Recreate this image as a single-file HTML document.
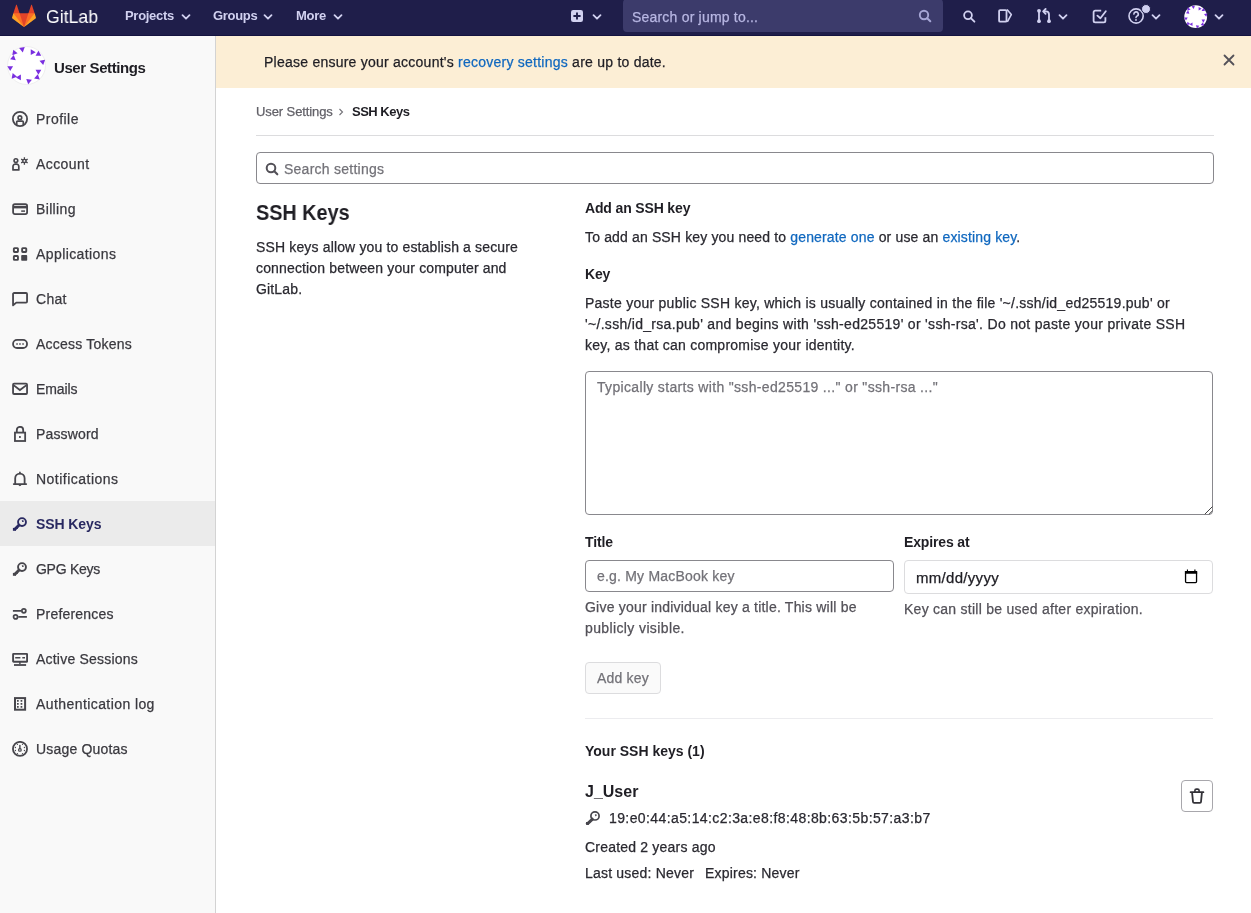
<!DOCTYPE html>
<html><head><meta charset="utf-8">
<style>
*{box-sizing:border-box;margin:0;padding:0}
.t,.lbl{will-change:transform;-webkit-text-stroke:0.25px currentColor}
.b,.nv,.act .lbl{-webkit-text-stroke:0}
html,body{width:1251px;height:913px;overflow:hidden;background:#fff;font-family:"Liberation Sans",sans-serif;color:#333238}
.a{position:absolute}
.t{position:absolute;white-space:nowrap;font-size:14px;line-height:14px}
.b{font-weight:bold}
#nav{position:absolute;left:0;top:0;width:1251px;height:36px;background:#1f1e4a;border-bottom:1px solid #141340}
.nv{color:#d1d1f0;font-weight:bold;font-size:13px;line-height:13px;letter-spacing:-0.3px}
#side{position:absolute;left:0;top:36px;width:216px;height:877px;background:#f9f9f9;border-right:1px solid #d3d3d3}
.si{position:absolute;left:0;width:215px;height:45px}
.si .lbl{position:absolute;left:36px;top:16px;font-size:14px;line-height:14px;letter-spacing:0.3px;color:#3a393f;white-space:nowrap}
.si svg{position:absolute;left:12px;top:15px}
.act{background:#ebebeb}
.act .lbl{color:#292961;font-weight:bold;letter-spacing:-0.1px}
#banner{position:absolute;left:216px;top:36px;width:1035px;height:52px;background:#fceed5}
a{color:#1068bf;text-decoration:none}
.help{color:#535158}
</style></head><body>

<!-- NAVBAR -->
<div id="nav">
  <svg class="a" style="left:11px;top:4px" width="26" height="24" viewBox="0 0 36 36">
    <path fill="#E24329" d="M2 14l9.38 9v-9l-4-12.28c-.205-.632-1.176-.632-1.38 0z"/>
    <path fill="#E24329" d="M34 14l-9.38 9v-9l4-12.28c.205-.632 1.176-.632 1.38 0z"/>
    <path fill="#E24329" d="M18,34.38 3,14 33,14 Z"/>
    <path fill="#FC6D26" d="M18,34.38 11.38,14 2,14 6,25Z"/>
    <path fill="#FC6D26" d="M18,34.38 24.62,14 34,14 30,25Z"/>
    <path fill="#FCA326" d="M2 14L.1 20.16c-.18.565 0 1.2.5 1.56l17.42 12.66z"/>
    <path fill="#FCA326" d="M34 14l1.9 6.16c.18.565 0 1.2-.5 1.56L18 34.38z"/>
  </svg>
  <div class="t" style="left:45.5px;top:7px;font-size:19px;line-height:19px;color:#fff;letter-spacing:0;transform:scaleX(0.93);transform-origin:0 0;-webkit-text-stroke:0">GitLab</div>
  <div class="t nv" style="left:125px;top:9px">Projects</div>
  <svg class="a" style="left:181px;top:12.5px" width="10" height="8" viewBox="0 0 10 8"><path d="M1.5 2.2 5 5.7 8.5 2.2" fill="none" stroke="#d1d1f0" stroke-width="1.8" stroke-linecap="round" stroke-linejoin="round"/></svg>
  <div class="t nv" style="left:213px;top:9px">Groups</div>
  <svg class="a" style="left:263px;top:12.5px" width="10" height="8" viewBox="0 0 10 8"><path d="M1.5 2.2 5 5.7 8.5 2.2" fill="none" stroke="#d1d1f0" stroke-width="1.8" stroke-linecap="round" stroke-linejoin="round"/></svg>
  <div class="t nv" style="left:296px;top:9px">More</div>
  <svg class="a" style="left:333px;top:12.5px" width="10" height="8" viewBox="0 0 10 8"><path d="M1.5 2.2 5 5.7 8.5 2.2" fill="none" stroke="#d1d1f0" stroke-width="1.8" stroke-linecap="round" stroke-linejoin="round"/></svg>

  <!-- plus -->
  <svg class="a" style="left:571px;top:10px" width="12" height="12" viewBox="0 0 12 12"><rect x="0" y="0" width="12" height="12" rx="2.2" fill="#d1d1f0"/><path d="M6 2.4v7.2M2.4 6h7.2" stroke="#1f1e4a" stroke-width="1.9"/></svg>
  <svg class="a" style="left:592px;top:13px" width="10" height="8" viewBox="0 0 10 8"><path d="M1.5 2.2 5 5.7 8.5 2.2" fill="none" stroke="#d1d1f0" stroke-width="1.8" stroke-linecap="round" stroke-linejoin="round"/></svg>

  <!-- search -->
  <div class="a" style="left:623px;top:-1px;width:320px;height:33px;background:#3c3b6b;border-radius:4px"></div>
  <div class="t" style="left:632px;top:10px;color:#b8b7e3;letter-spacing:0.2px">Search or jump to...</div>
  <svg class="a" style="left:918px;top:9px" width="14" height="14" viewBox="0 0 14 14"><circle cx="6" cy="6" r="4.2" fill="none" stroke="#a6a6d6" stroke-width="1.9"/><path d="M9.2 9.2 12.3 12.3" stroke="#a6a6d6" stroke-width="2" stroke-linecap="round"/></svg>

  <!-- right icons -->
  <svg class="a" style="left:961px;top:9px" width="16" height="16" viewBox="0 0 16 16"><circle cx="7" cy="6.3" r="3.9" fill="none" stroke="#d1d1f0" stroke-width="1.8"/><path d="M9.8 9.1 13.4 12.7" stroke="#d1d1f0" stroke-width="1.9" stroke-linecap="round"/></svg>
  <svg class="a" style="left:997px;top:8px" width="16" height="16" viewBox="0 0 16 16"><rect x="2.1" y="2.1" width="7.4" height="11.6" rx="1" fill="none" stroke="#d1d1f0" stroke-width="1.8"/><path d="M10 1.6 14.3 6.6 10.3 13.9" fill="none" stroke="#d1d1f0" stroke-width="1.6" stroke-linejoin="round"/></svg>
  <svg class="a" style="left:1036px;top:8px" width="16" height="16" viewBox="0 0 16 16"><path d="M3 2.8v10.4" stroke="#d1d1f0" stroke-width="1.8"/><circle cx="3" cy="2.8" r="1.9" fill="#d1d1f0"/><circle cx="3" cy="13.2" r="1.9" fill="#d1d1f0"/><circle cx="13" cy="13.2" r="1.9" fill="#d1d1f0"/><path d="M13 13V6.6Q13 3.4 9.8 3.4H7.6" fill="none" stroke="#d1d1f0" stroke-width="1.8"/><path d="M9.6 1 7.2 3.4 9.6 5.8" fill="none" stroke="#d1d1f0" stroke-width="1.8" stroke-linejoin="round" stroke-linecap="round"/></svg>
  <svg class="a" style="left:1058px;top:13px" width="10" height="8" viewBox="0 0 10 8"><path d="M1.5 2.2 5 5.7 8.5 2.2" fill="none" stroke="#d1d1f0" stroke-width="1.8" stroke-linecap="round" stroke-linejoin="round"/></svg>
  <svg class="a" style="left:1092px;top:9px" width="16" height="16" viewBox="0 0 16 16"><path d="M9.2 1.6H3.2a1.6 1.6 0 0 0-1.6 1.6v8.6a1.6 1.6 0 0 0 1.6 1.6h8.6a1.6 1.6 0 0 0 1.6-1.6V8.2" fill="none" stroke="#d1d1f0" stroke-width="1.8"/><path d="M5.4 6.6 8.4 9.2 13.8 2.2" fill="none" stroke="#d1d1f0" stroke-width="1.8" stroke-linecap="round" stroke-linejoin="round"/></svg>
  <svg class="a" style="left:1127px;top:7px" width="18" height="18" viewBox="0 0 18 18"><circle cx="9.1" cy="9" r="7.1" fill="none" stroke="#d1d1f0" stroke-width="1.6"/><path d="M6.9 7.1a2.2 2.2 0 1 1 3.1 2c-.7.35-1 .8-1 1.5" fill="none" stroke="#d1d1f0" stroke-width="1.6" stroke-linecap="round"/><circle cx="9" cy="12.9" r="0.95" fill="#d1d1f0"/></svg>
  <div class="a" style="left:1141px;top:4px;width:10px;height:10px;border-radius:50%;background:#cfcff0;border:1px solid #1f1e4a"></div>
  <svg class="a" style="left:1151px;top:13px" width="10" height="8" viewBox="0 0 10 8"><path d="M1.5 2.2 5 5.7 8.5 2.2" fill="none" stroke="#d1d1f0" stroke-width="1.8" stroke-linecap="round" stroke-linejoin="round"/></svg>
  <svg class="a" style="left:1184px;top:5px" width="24" height="24" viewBox="0 0 39 39" id="av2"><circle cx="19" cy="19" r="18.5" fill="#fff"/><polygon points="12.10,2.07 17.73,1.08 15.77,6.45" fill="#7a2fe0"/><polygon points="6.27,3.70 10.65,7.37 5.28,9.33" fill="#7a2fe0"/><polygon points="23.75,9.06 23.75,3.34 28.70,6.20" fill="#7a2fe0"/><polygon points="34.26,9.65 28.54,9.65 31.40,4.70" fill="#7a2fe0"/><polygon points="6.77,8.95 8.73,14.32 3.10,13.33" fill="#7a2fe0"/><polygon points="36.17,19.05 32.50,14.67 38.13,13.68" fill="#7a2fe0"/><polygon points="6.06,20.15 3.20,25.10 0.34,20.15" fill="#7a2fe0"/><polygon points="28.54,23.75 34.26,23.75 31.40,28.70" fill="#7a2fe0"/><polygon points="10.05,30.77 4.68,32.73 5.67,27.10" fill="#7a2fe0"/><polygon points="13.85,34.26 8.90,31.40 13.85,28.54" fill="#7a2fe0"/><polygon points="27.10,32.53 30.77,28.15 32.73,33.52" fill="#7a2fe0"/><polygon points="21.23,38.25 19.27,32.88 24.90,33.87" fill="#7a2fe0"/></svg>
  <svg class="a" style="left:1214px;top:13px" width="10" height="8" viewBox="0 0 10 8"><path d="M1.5 2.2 5 5.7 8.5 2.2" fill="none" stroke="#d1d1f0" stroke-width="1.8" stroke-linecap="round" stroke-linejoin="round"/></svg>
</div>

<!-- SIDEBAR -->
<div id="side">
  <div class="a" style="left:7px;top:10px;width:39px;height:39px;border-radius:50%;background:#fff;border:1px solid #efefef"></div>
  <svg class="a" style="left:7px;top:10px" width="39" height="39" viewBox="0 0 39 39" id="av1"><polygon points="12.10,2.07 17.73,1.08 15.77,6.45" fill="#7a2fe0"/><polygon points="6.27,3.70 10.65,7.37 5.28,9.33" fill="#7a2fe0"/><polygon points="23.75,9.06 23.75,3.34 28.70,6.20" fill="#7a2fe0"/><polygon points="34.26,9.65 28.54,9.65 31.40,4.70" fill="#7a2fe0"/><polygon points="6.77,8.95 8.73,14.32 3.10,13.33" fill="#7a2fe0"/><polygon points="36.17,19.05 32.50,14.67 38.13,13.68" fill="#7a2fe0"/><polygon points="6.06,20.15 3.20,25.10 0.34,20.15" fill="#7a2fe0"/><polygon points="28.54,23.75 34.26,23.75 31.40,28.70" fill="#7a2fe0"/><polygon points="10.05,30.77 4.68,32.73 5.67,27.10" fill="#7a2fe0"/><polygon points="13.85,34.26 8.90,31.40 13.85,28.54" fill="#7a2fe0"/><polygon points="27.10,32.53 30.77,28.15 32.73,33.52" fill="#7a2fe0"/><polygon points="21.23,38.25 19.27,32.88 24.90,33.87" fill="#7a2fe0"/></svg>
  <div class="t b" style="left:54px;top:24px;font-size:15px;line-height:15px;color:#1f1e24;letter-spacing:-0.4px">User Settings</div>
</div>

<!--ITEMS-->
<div class="si" style="top:96px"><svg width="16" height="16" viewBox="0 0 16 16"><circle cx="8" cy="8" r="7.1" fill="none" stroke="#47464c" stroke-width="1.8"/><circle cx="7.9" cy="6.7" r="1.85" fill="none" stroke="#47464c" stroke-width="1.6"/><path d="M4.7 14V11.1a1 1 0 0 1 1-1h4.6a1 1 0 0 1 1 1V14" fill="none" stroke="#47464c" stroke-width="1.7"/></svg><div class="lbl" style="letter-spacing:0.467px">Profile</div></div>
<div class="si" style="top:141px"><svg width="16" height="16" viewBox="0 0 16 16"><circle cx="3.9" cy="4.6" r="1.85" fill="none" stroke="#47464c" stroke-width="1.6"/><path d="M1 13.9V10.4a2.3 2.3 0 0 1 2.3-2.3h1.2a2.3 2.3 0 0 1 2.3 2.3v3.5z" fill="none" stroke="#47464c" stroke-width="1.7" stroke-linejoin="round"/><circle cx="12.4" cy="4.95" r="2.3" fill="#47464c"/><path d="M12.4 1.2v7.5M9.15 3.07l6.5 3.75M9.15 6.83l6.5-3.75" stroke="#47464c" stroke-width="1.3"/><circle cx="12.4" cy="4.95" r="0.9" fill="#f9f9f9"/></svg><div class="lbl" style="letter-spacing:0.417px">Account</div></div>
<div class="si" style="top:186px"><svg width="16" height="16" viewBox="0 0 16 16"><rect x="1.1" y="3.1" width="14" height="10" rx="1.8" fill="none" stroke="#47464c" stroke-width="1.8"/><path d="M1 6.1h14" stroke="#47464c" stroke-width="2.6"/><path d="M9.2 10.1h3.8" stroke="#47464c" stroke-width="1.5"/></svg><div class="lbl" style="letter-spacing:0.350px">Billing</div></div>
<div class="si" style="top:231px"><svg width="16" height="16" viewBox="0 0 16 16"><rect x="1.85" y="2.15" width="4.1" height="3.8" rx="0.6" fill="none" stroke="#47464c" stroke-width="1.9"/><rect x="10.15" y="2.15" width="4.1" height="3.8" rx="0.6" fill="none" stroke="#47464c" stroke-width="1.9"/><rect x="1.85" y="10.05" width="4.1" height="3.8" rx="0.6" fill="none" stroke="#47464c" stroke-width="1.9"/><rect x="9.2" y="9.1" width="6" height="5.7" rx="0.8" fill="#47464c"/></svg><div class="lbl" style="letter-spacing:0.409px">Applications</div></div>
<div class="si" style="top:276px"><svg width="16" height="16" viewBox="0 0 16 16"><path d="M1.05 14.3V3a1 1 0 0 1 1-1h12a1 1 0 0 1 1 1v7.6a1 1 0 0 1-1 1H4.3z" fill="none" stroke="#47464c" stroke-width="1.8" stroke-linejoin="round"/></svg><div class="lbl" style="letter-spacing:0.300px">Chat</div></div>
<div class="si" style="top:321px"><svg width="16" height="16" viewBox="0 0 16 16"><rect x="1.05" y="3.95" width="14" height="8.05" rx="4" fill="none" stroke="#47464c" stroke-width="1.8"/><rect x="4.3" y="7.25" width="1.5" height="1.5" fill="#47464c"/><rect x="7.2" y="7.25" width="1.5" height="1.5" fill="#47464c"/><rect x="10.3" y="7.25" width="1.5" height="1.5" fill="#47464c"/></svg><div class="lbl" style="letter-spacing:0.217px">Access Tokens</div></div>
<div class="si" style="top:366px"><svg width="16" height="16" viewBox="0 0 16 16"><rect x="1.05" y="2.7" width="14" height="10.3" rx="1" fill="none" stroke="#47464c" stroke-width="1.8"/><path d="M1.5 4.1 7.9 9l6.6-4.9" fill="none" stroke="#47464c" stroke-width="1.8"/></svg><div class="lbl" style="letter-spacing:-0.100px">Emails</div></div>
<div class="si" style="top:411px"><svg width="16" height="16" viewBox="0 0 16 16"><rect x="2.95" y="6.6" width="10.2" height="8.4" fill="none" stroke="#47464c" stroke-width="1.8"/><path d="M4.8 6.6V4a3.2 3.2 0 0 1 6.4 0v2.6" fill="none" stroke="#47464c" stroke-width="1.8"/><rect x="7" y="10.1" width="1.8" height="1.8" fill="#47464c"/></svg><div class="lbl" style="letter-spacing:0.157px">Password</div></div>
<div class="si" style="top:456px"><svg width="16" height="16" viewBox="0 0 16 16"><path d="M3.2 13V7.3a4.7 4.7 0 0 1 9.4 0V13" fill="none" stroke="#47464c" stroke-width="1.8"/><path d="M1.8 13.1h12.4" stroke="#47464c" stroke-width="1.9" stroke-linecap="round"/><path d="M6.7 13.5a1.2 1.2 0 0 0 2.4 0z" fill="#47464c" stroke="#47464c" stroke-width="0.8"/><path d="M7.9 1.2v1.4" stroke="#47464c" stroke-width="1.6" stroke-linecap="round"/></svg><div class="lbl" style="letter-spacing:0.483px">Notifications</div></div>
<div class="si act" style="top:501px"><svg width="16" height="16" viewBox="0 0 16 16"><circle cx="10" cy="6.1" r="3.95" fill="none" stroke="#292961" stroke-width="1.9"/><path d="M10.2 4.6l1.4.3-.9 1z" fill="#292961" stroke="#292961" stroke-width="0.8"/><path d="M7.9 8.3 2.4 13.8" stroke="#292961" stroke-width="3"/><rect x="0.9" y="11.9" width="3" height="2.9" fill="#292961"/><rect x="3.7" y="11" width="2.1" height="1.9" fill="#292961"/></svg><div class="lbl" style="letter-spacing:-0.100px">SSH Keys</div></div>
<div class="si" style="top:546px"><svg width="16" height="16" viewBox="0 0 16 16"><circle cx="10" cy="6.1" r="3.95" fill="none" stroke="#47464c" stroke-width="1.9"/><path d="M10.2 4.6l1.4.3-.9 1z" fill="#47464c" stroke="#47464c" stroke-width="0.8"/><path d="M7.9 8.3 2.4 13.8" stroke="#47464c" stroke-width="3"/><rect x="0.9" y="11.9" width="3" height="2.9" fill="#47464c"/><rect x="3.7" y="11" width="2.1" height="1.9" fill="#47464c"/></svg><div class="lbl" style="letter-spacing:-0.271px">GPG Keys</div></div>
<div class="si" style="top:591px"><svg width="16" height="16" viewBox="0 0 16 16"><path d="M0.9 4.85h8.3M6.3 10.9h8.6" stroke="#47464c" stroke-width="1.8"/><circle cx="11.85" cy="4.85" r="2" fill="none" stroke="#47464c" stroke-width="1.7"/><circle cx="3.55" cy="10.9" r="2" fill="none" stroke="#47464c" stroke-width="1.7"/></svg><div class="lbl" style="letter-spacing:0.200px">Preferences</div></div>
<div class="si" style="top:636px"><svg width="16" height="16" viewBox="0 0 16 16"><rect x="1.1" y="2.85" width="14" height="7.9" rx="0.5" fill="none" stroke="#47464c" stroke-width="1.9"/><path d="M3.2 6.8h5.2M10.3 6.8h2.7" stroke="#47464c" stroke-width="1.5"/><path d="M7.9 10.8v2.2" stroke="#47464c" stroke-width="1.4"/><path d="M2 14h12.1" stroke="#47464c" stroke-width="1.8"/></svg><div class="lbl" style="letter-spacing:0.214px">Active Sessions</div></div>
<div class="si" style="top:681px"><svg width="16" height="16" viewBox="0 0 16 16"><rect x="3" y="2.1" width="10.1" height="11.6" fill="none" stroke="#47464c" stroke-width="2"/><path d="M5 4.85h1.7M8.6 4.85h1.7M5 7.9h1.7M8.6 7.9h1.7M5 10.9h1.7M8.6 10.9h1.7" stroke="#47464c" stroke-width="1.6"/></svg><div class="lbl" style="letter-spacing:0.418px">Authentication log</div></div>
<div class="si" style="top:726px"><svg width="16" height="16" viewBox="0 0 16 16"><circle cx="8" cy="7.9" r="7.05" fill="none" stroke="#47464c" stroke-width="1.8"/><circle cx="5.45" cy="3.3" r="0.65" fill="#47464c"/><circle cx="10.5" cy="3.3" r="0.65" fill="#47464c"/><circle cx="3.4" cy="6.5" r="0.65" fill="#47464c"/><circle cx="12.4" cy="6.5" r="0.65" fill="#47464c"/><circle cx="3.4" cy="9.5" r="0.65" fill="#47464c"/><circle cx="12.4" cy="9.5" r="0.65" fill="#47464c"/><circle cx="5.45" cy="12.6" r="0.65" fill="#47464c"/><circle cx="10.5" cy="12.6" r="0.65" fill="#47464c"/><path d="M7.9 4.4v3.2" stroke="#47464c" stroke-width="1.4" stroke-linecap="round"/><circle cx="7.9" cy="8.9" r="1.35" fill="none" stroke="#47464c" stroke-width="1.2"/></svg><div class="lbl" style="letter-spacing:0.191px">Usage Quotas</div></div>
<!--/ITEMS-->

<!-- BANNER -->
<div id="banner">
  <div class="t" style="left:48px;top:55px;letter-spacing:0.24px;color:#1f1e24;top:19px">Please ensure your account's <a>recovery settings</a> are up to date.</div>
  <svg class="a" style="left:1007px;top:18px" width="12" height="12" viewBox="0 0 12 12"><path d="M1.5 1.5 10.5 10.5M10.5 1.5 1.5 10.5" stroke="#535158" stroke-width="1.8" stroke-linecap="round"/></svg>
</div>

<!-- MAIN -->
<div class="t" style="left:256px;top:105px;font-size:13px;line-height:13px;color:#626168;letter-spacing:-0.1px">User Settings</div>
<svg class="a" style="left:338px;top:108px" width="6" height="8" viewBox="0 0 6 8"><path d="M1.5 1 4.5 4 1.5 7" fill="none" stroke="#737278" stroke-width="1.1"/></svg>
<div class="t b" style="left:352px;top:105px;font-size:13px;line-height:13px;color:#1f1e24;letter-spacing:-0.5px">SSH Keys</div>
<div class="a" style="left:256px;top:135px;width:958px;height:1px;background:#dcdcde"></div>

<div class="a" style="left:256px;top:152px;width:958px;height:32px;border:1px solid #89888d;border-radius:4px"></div>
<svg class="a" style="left:265px;top:162px" width="14" height="14" viewBox="0 0 14 14"><circle cx="6" cy="6" r="4.3" fill="none" stroke="#535158" stroke-width="2"/><path d="M9.3 9.3 12.3 12.3" stroke="#535158" stroke-width="2.1" stroke-linecap="round"/></svg>
<div class="t" style="left:284px;top:162px;color:#737278;letter-spacing:0.25px">Search settings</div>

<div class="t b" style="left:256px;top:202px;font-size:22px;line-height:22px;color:#1f1e24;letter-spacing:0;transform:scaleX(0.9);transform-origin:0 0">SSH Keys</div>
<div class="t" style="left:256px;top:237px;color:#2a2930;line-height:20.8px;letter-spacing:0.15px">SSH keys allow you to establish a secure<br>connection between your computer and<br>GitLab.</div>

<div class="t b" style="left:585px;top:201px;color:#1f1e24;letter-spacing:-0.15px">Add an SSH key</div>
<div class="t" style="left:585px;top:230px;color:#2a2930;letter-spacing:0.15px">To add an SSH key you need to <a>generate one</a> or use an <a>existing key</a>.</div>
<div class="t b" style="left:585px;top:267px;color:#1f1e24;letter-spacing:-0.15px">Key</div>
<div class="t" style="left:585px;top:293px;color:#2a2930;line-height:20.8px;letter-spacing:0.25px">Paste your public SSH key, which is usually contained in the file '~/.ssh/id_ed25519.pub' or<br><span style="letter-spacing:0.305px">'~/.ssh/id_rsa.pub' and begins with 'ssh-ed25519' or 'ssh-rsa'. Do not paste your private SSH</span><br>key, as that can compromise your identity.</div>

<div class="a" style="left:585px;top:371px;width:628px;height:144px;border:1px solid #89888d;border-radius:4px"></div>
<div class="t" style="left:597px;top:380px;color:#737278;letter-spacing:0.33px">Typically starts with "ssh-ed25519 ..." or "ssh-rsa ..."</div>
<svg class="a" style="left:1203px;top:505px" width="10" height="10" viewBox="0 0 10 10"><path d="M9.5 1.5 1.8 9.2M9.5 5.8 5.9 9.4" stroke="#444" stroke-width="1"/></svg>

<div class="t b" style="left:585px;top:535px;color:#1f1e24;letter-spacing:-0.15px">Title</div>
<div class="t b" style="left:904px;top:535px;color:#1f1e24;letter-spacing:-0.15px">Expires at</div>
<div class="a" style="left:585px;top:560px;width:309px;height:32px;border:1px solid #89888d;border-radius:4px"></div>
<div class="t" style="left:597px;top:569px;color:#737278;letter-spacing:0.2px">e.g. My MacBook key</div>
<div class="a" style="left:904px;top:560px;width:309px;height:34px;border:1px solid #dcdcde;border-radius:4px"></div>
<div class="t" style="left:916px;top:570px;font-size:15px;line-height:15px;color:#1f1e24;letter-spacing:0.3px">mm/dd/yyyy</div>
<svg class="a" style="left:1184px;top:569px" width="14" height="15" viewBox="0 0 14 15"><rect x="1.55" y="2.65" width="11" height="10.9" rx="1" fill="none" stroke="#000" stroke-width="1.3"/><rect x="0.9" y="2" width="12.3" height="2.8" rx="0.6" fill="#000"/><path d="M2.9 0.6h1.1v1.6H2.9zM10.3 0.6h1.2v1.6h-1.2z" fill="#000"/></svg>
<div class="t help" style="left:585px;top:597px;line-height:20.8px;letter-spacing:0.25px"><span style="letter-spacing:0.21px">Give your individual key a title. This will be</span><br><span style="letter-spacing:0.38px">publicly visible.</span></div>
<div class="t help" style="left:904px;top:602px;letter-spacing:0.26px">Key can still be used after expiration.</div>

<div class="a" style="left:585px;top:662px;width:76px;height:32px;border:1px solid #dcdcde;border-radius:4px;background:#fafafa"></div>
<div class="t" style="left:597px;top:671px;color:#737278;letter-spacing:0.2px">Add key</div>

<div class="a" style="left:585px;top:718px;width:628px;height:1px;background:#ececef"></div>
<div class="t b" style="left:585px;top:744px;color:#1f1e24;letter-spacing:0px">Your SSH keys (1)</div>
<div class="t b" style="left:585px;top:784px;font-size:16px;line-height:16px;color:#1f1e24">J_User</div>
<svg class="a" style="left:585px;top:805px" width="18" height="20" viewBox="0 0 18 20"><circle cx="10" cy="10.9" r="4.1" fill="none" stroke="#47464c" stroke-width="1.7"/><path d="M10.3 9.6l1.3.5-1 .9z" fill="#47464c" stroke="#47464c" stroke-width="0.7"/><path d="M7.2 14.3 2.7 18.6" stroke="#47464c" stroke-width="3" stroke-linecap="square"/><path d="M1 17h2.9v2.8H1z" fill="#47464c"/><path d="M3.9 16h2.1v1.4H3.9z" fill="#47464c"/></svg>
<div class="t" style="left:609px;top:811px;color:#2a2930;letter-spacing:0.40px">19:e0:44:a5:14:c2:3a:e8:f8:48:8b:63:5b:57:a3:b7</div>
<div class="t" style="left:585px;top:840px;color:#2a2930;letter-spacing:0.2px">Created 2 years ago</div>
<div class="t" style="left:585px;top:866px;color:#2a2930;letter-spacing:0.2px">Last used: Never</div>
<div class="t" style="left:705px;top:866px;color:#2a2930;letter-spacing:0.2px">Expires: Never</div>
<div class="a" style="left:1181px;top:780px;width:32px;height:32px;border:1px solid #a8a7ac;border-radius:4px;background:#fff"></div>
<svg class="a" style="left:1189px;top:788px" width="16" height="16" viewBox="0 0 16 16"><path d="M1.6 4.2h12.8" stroke="#333238" stroke-width="1.8" stroke-linecap="round"/><path d="M5.9 4V2.6a1.5 1.5 0 0 1 1.5-1.5h1.2a1.5 1.5 0 0 1 1.5 1.5V4" fill="none" stroke="#333238" stroke-width="1.6"/><path d="M3.1 4.6l.9 9.2a1.1 1.1 0 0 0 1.1 1h5.8a1.1 1.1 0 0 0 1.1-1l.9-9.2" fill="none" stroke="#333238" stroke-width="1.8" stroke-linejoin="round"/></svg>

</body></html>
